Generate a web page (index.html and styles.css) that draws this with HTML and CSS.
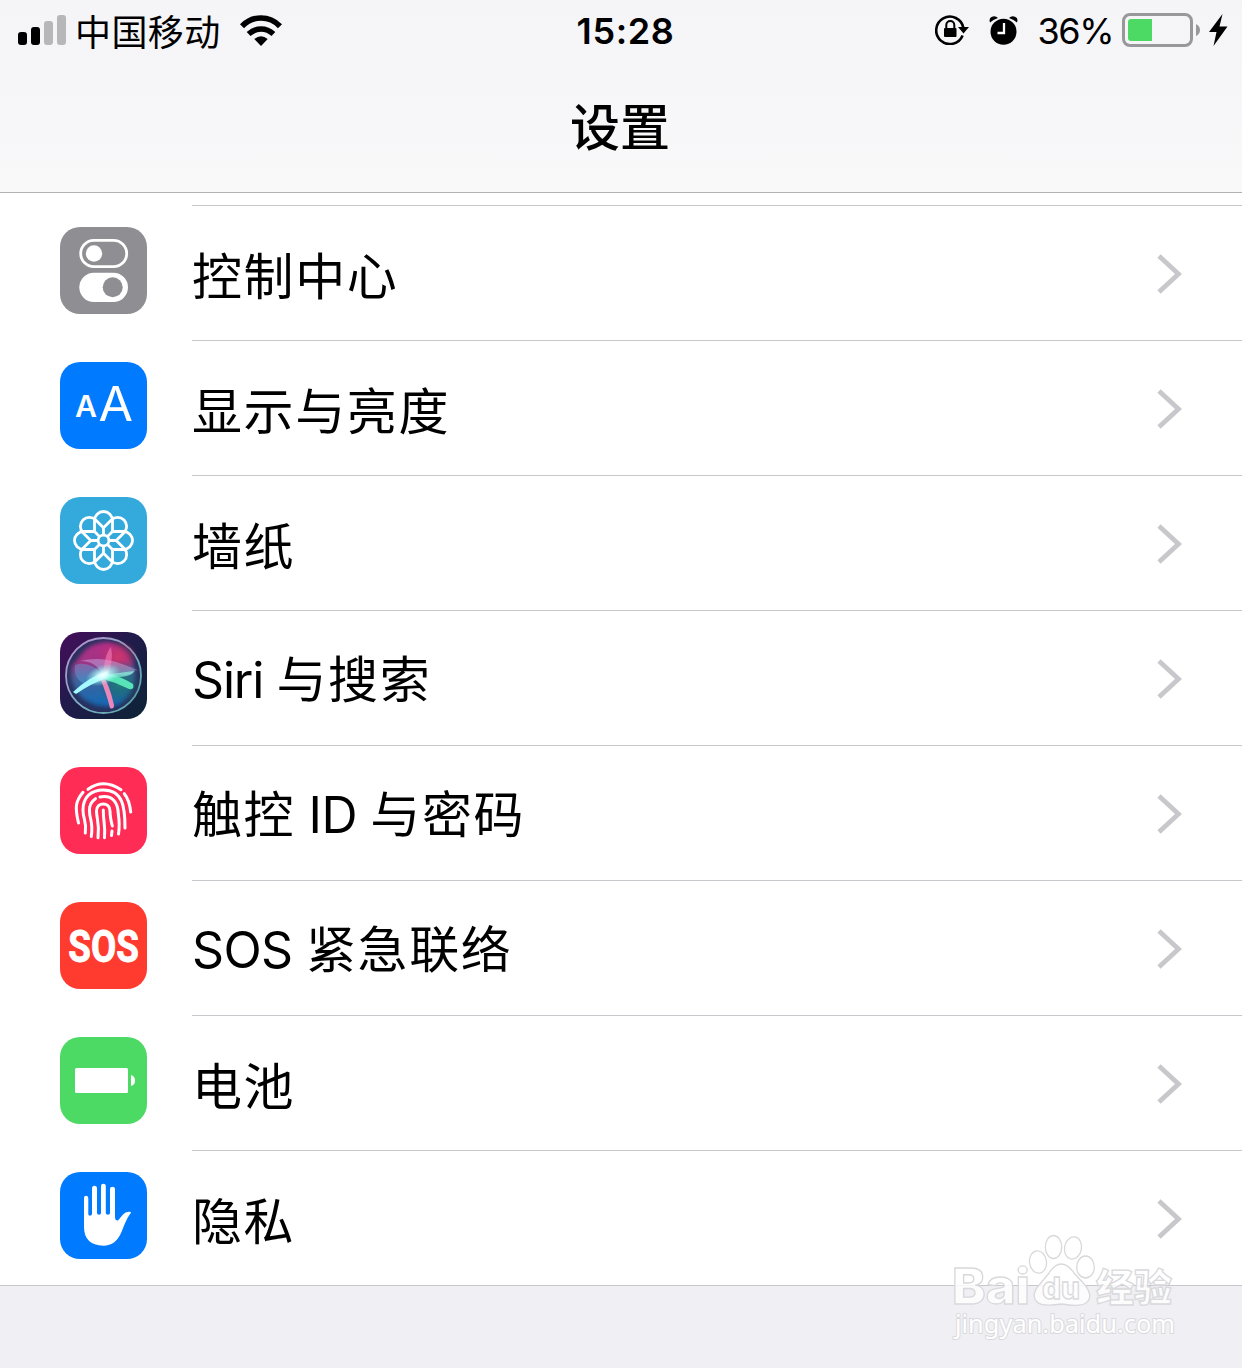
FILE: index.html
```html
<!DOCTYPE html>
<html lang="zh-CN">
<head>
<meta charset="utf-8">
<title>设置</title>
<link rel="stylesheet" href="styles.css">
</head>
<body>
<header class="header">
  <div class="status">
    <div class="status-left">
      <svg class="signal" width="48" height="30" viewBox="0 0 48 30"><rect y="17" width="9" height="13" rx="3"/><rect x="13" y="12" width="9" height="18" rx="3"/><g fill="#b7b7b9"><rect x="26" y="6" width="9" height="24" rx="3"/><rect x="39" width="9" height="30" rx="3"/></g></svg>
      <span class="carrier">中国移动</span>
      <svg class="wifi" width="42" height="31" viewBox="0 0 42 31"><g fill="none" stroke="#000" stroke-width="5.6"><path d="M2 11.2Q10 3 21 3T40 11.2"/><path d="M8.600 19Q14 14 21 14T33.400 19"/></g><path d="M14.300 24Q21 18.400 27.700 24L21 31Z"/></svg>
    </div>
    <time class="time">15:28</time>
    <div class="status-right">
      <svg class="lock" width="34" height="31" viewBox="0 0 34 31"><path d="M27.600 21.500A13.700 13.700 0 1 1 28.400 14" fill="none" stroke="#000" stroke-width="2.600"/><path d="M23 13h11l-5.500 6.500Z"/><rect x="9" y="14" width="12.500" height="9" rx="1"/><path d="M11.300 15v-4a4 4 0 0 1 8 0v4" fill="none" stroke="#000" stroke-width="2"/></svg>
      <svg class="alarm" width="29" height="29" viewBox="0 0 29 29"><circle cx="14.500" cy="15.800" r="13"/><path d="M1 6.500Q-.5 2 3 .7T9 2Q4 3.500 1 6.500ZM28 6.500Q29.500 2 26 .7T20 2Q25 3.500 28 6.500Z"/><path d="M15 7v10H8.500" fill="none" stroke="#fff" stroke-width="2.300"/></svg>
      <span class="percent">36%</span>
      <svg class="battery" width="79" height="34" viewBox="0 0 79 34"><rect x="1.500" y="1.500" width="68" height="31" rx="6.500" fill="none" stroke="#98989b" stroke-width="3"/><path d="M9 6H30V28H9Q6 28 6 25V9Q6 6 9 6Z" fill="#4cd964"/><path d="M74 11Q78 13 78 17T74 23Z" fill="#98989b"/></svg>
      <svg class="bolt" width="19" height="32" viewBox="0 0 19 32"><path d="M13.500 0L0 18H7.500L4.500 32L18.500 12.500H10.500Z"/></svg>
    </div>
  </div>
  <h1 class="title">设置</h1>
</header>
<main>
<ul class="list">
  <li class="row">
    <svg class="icon gray" viewBox="0 0 87 87"><rect x="20.700" y="13.400" width="46" height="26.300" rx="13.150" fill="none" stroke="#fff" stroke-width="2.800"/><circle cx="34" cy="26.500" r="8.200" fill="#fff"/><rect x="19.300" y="45.700" width="48.700" height="29.300" rx="14.650" fill="#fff"/><circle cx="52.700" cy="60.300" r="10" fill="#8e8e93"/></svg>
    <div class="cell"><span class="label">控制中心</span><svg class="chevron" viewBox="0 0 25 40"><path d="M2 2L21.500 20L2 38"/></svg></div>
  </li>
  <li class="row">
    <svg class="icon blue" viewBox="0 0 87 87"><g class="letters"><text x="15" y="54.700" font-size="29.500" font-weight="600" textLength="22" lengthAdjust="spacingAndGlyphs">A</text><text x="38.500" y="59" font-size="47.500" font-weight="400" textLength="34.500" lengthAdjust="spacingAndGlyphs">A</text></g></svg>
    <div class="cell"><span class="label">显示与亮度</span><svg class="chevron" viewBox="0 0 25 40"><path d="M2 2L21.500 20L2 38"/></svg></div>
  </li>
  <li class="row">
    <svg class="icon cyan" viewBox="0 0 87 87"><defs><path id="petal" d="M-9-9V-20A9 9 0 0 1 9-20V-9M0-12.700V-5"/></defs><g transform="translate(43.500 43.500)" fill="none" stroke="#fff" stroke-width="2.800"><circle r="5.400"/><use href="#petal"/><use href="#petal" transform="rotate(45)"/><use href="#petal" transform="rotate(90)"/><use href="#petal" transform="rotate(135)"/><use href="#petal" transform="rotate(180)"/><use href="#petal" transform="rotate(225)"/><use href="#petal" transform="rotate(270)"/><use href="#petal" transform="rotate(315)"/></g></svg>
    <div class="cell"><span class="label">墙纸</span><svg class="chevron" viewBox="0 0 25 40"><path d="M2 2L21.500 20L2 38"/></svg></div>
  </li>
  <li class="row">
    <svg class="icon" viewBox="0 0 87 87">
      <defs>
        <linearGradient id="sky" x1="0" y1="0" x2="1" y2="1"><stop stop-color="#470d5b"/><stop offset=".45" stop-color="#211b4b"/><stop offset="1" stop-color="#0b2435"/></linearGradient>
        <linearGradient id="ring" x1="0" y1="0" x2="1" y2="1"><stop stop-color="#c58bd0"/><stop offset=".5" stop-color="#7fb0c4"/><stop offset="1" stop-color="#58a5a8"/></linearGradient>
        <linearGradient id="orb" x1=".4" y1="0" x2=".5" y2="1"><stop stop-color="#b32c87"/><stop offset=".3" stop-color="#a03484"/><stop offset=".55" stop-color="#40659c"/><stop offset="1" stop-color="#1268b5"/></linearGradient>
        <radialGradient id="red"><stop stop-color="#cc386c"/><stop offset="1" stop-color="#d32767" stop-opacity="0"/></radialGradient>
        <radialGradient id="teal"><stop stop-color="#1e8278"/><stop offset="1" stop-color="#13585d" stop-opacity="0"/></radialGradient>
        <radialGradient id="glow"><stop stop-color="#fff"/><stop offset=".3" stop-color="#d5ffff" stop-opacity=".85"/><stop offset="1" stop-color="#8affee" stop-opacity="0"/></radialGradient>
        <filter id="soft"><feGaussianBlur stdDeviation=".6"/></filter>
        <filter id="haze"><feGaussianBlur stdDeviation="2"/></filter>
      </defs>
      <rect width="87" height="87" fill="url(#sky)"/>
      <circle cx="43.500" cy="43.500" r="37.500" fill="#28305f" stroke="url(#ring)" stroke-width="1.800"/>
      <path d="M20 24Q30 10 48 10Q68 15 75 38Q75 60 60 72Q42 79 23 67Q8 52 12 34Z" fill="url(#orb)" filter="url(#haze)"/>
      <ellipse cx="58" cy="25" rx="20" ry="17" fill="url(#red)"/>
      <ellipse cx="60" cy="51" rx="22" ry="23" fill="url(#teal)"/>
      <g filter="url(#soft)">
        <path d="M20 29Q40 24 62 32T75 38Q75 42 65 43L43 44Q37 29 20 29Z" fill="#d7c8ff" opacity=".38"/>
        <path d="M43 45Q44 23 51 15Q54 28 47 45Z" fill="#ff8cc5" opacity=".5"/>
        <path d="M15 33Q29 28 45 44L27 53Q13 48 15 33Z" fill="#5bc6ff" opacity=".3"/>
        <path d="M47 41Q62 45 73 52Q75 58 69 57Q55 50 40 46Z" fill="#59e4b6"/>
        <path d="M43 43L74 39Q72 45 55 45L42 47Z" fill="#8af1dc" opacity=".7"/>
        <path d="M42 42Q49 51 54 73Q54 78 50 76Q47 63 40 46Z" fill="#ed87ba"/>
        <path d="M48 39Q30 44 13 60L16 62Q30 52 47 46Z" fill="#a5faff"/>
      </g>
      <ellipse cx="43" cy="43" rx="18" ry="10" transform="rotate(-20 43 43)" fill="url(#glow)"/>
    </svg>
    <div class="cell"><span class="label"><span class="latin tight">Siri</span> 与搜索</span><svg class="chevron" viewBox="0 0 25 40"><path d="M2 2L21.500 20L2 38"/></svg></div>
  </li>
  <li class="row">
    <svg class="icon pink" viewBox="0 0 87 87"><g fill="none" stroke="#fff" stroke-width="3" stroke-linecap="round"><path d="M28 22.300Q43.500 11 61 22.700M23 25.300C15 35 15 41 18.500 56M64.300 26.700Q69.500 33 70.700 45"/><path d="M25.300 66C27 54 23 53 23 43C23 30 31 23 43.300 23C63 23 65 40 65 61"/><path d="M31.300 69.500C33.500 54 29.500 53 29.500 44Q29 36 35.500 31.700M40 30C53 27.500 58 36 58.300 47Q60 58 58.500 67"/><path d="M38 70.700C39.800 56 36.500 52 36.500 44C36.500 34.500 50 34.500 50 44Q50 50 52.300 59M52 64L51.500 68.500M44.500 70.700C45.500 57 43.300 56 43.300 43"/></g></svg>
    <div class="cell"><span class="label">触控 <span class="latin">ID</span> 与密码</span><svg class="chevron" viewBox="0 0 25 40"><path d="M2 2L21.500 20L2 38"/></svg></div>
  </li>
  <li class="row">
    <svg class="icon red" viewBox="0 0 87 87"><text class="sos" x="8.300" y="59.700" textLength="70.500" lengthAdjust="spacingAndGlyphs">SOS</text></svg>
    <div class="cell"><span class="label"><span class="latin">SOS</span> 紧急联络</span><svg class="chevron" viewBox="0 0 25 40"><path d="M2 2L21.500 20L2 38"/></svg></div>
  </li>
  <li class="row">
    <svg class="icon green" viewBox="0 0 87 87"><rect x="15" y="31" width="53" height="25" rx="1.500" fill="#fff"/><path d="M71 38Q75 39 75 43.500T71 49Z" fill="#fff"/></svg>
    <div class="cell"><span class="label">电池</span><svg class="chevron" viewBox="0 0 25 40"><path d="M2 2L21.500 20L2 38"/></svg></div>
  </li>
  <li class="row">
    <svg class="icon blue" viewBox="0 0 87 87"><path d="M24 26Q24 23.700 26 23.700T28.300 26V42Q28.300 43.800 30 43.800T32 42V16.500Q32 13.700 34.500 13.700T37 16.500V41Q37 42.700 39 42.700T41 41V14Q41 11.700 43.400 11.700T45.800 14V41Q45.800 42.700 47.900 42.700T50 41V17Q50 14.700 52.500 14.700T55 17V45Q55 48.700 58 48.500L63 42.500Q66 39 71 40Q71 41 69 43.500Q66 48 61.700 59.500Q56 73.700 43.300 73.700Q24 73 24 55Z" fill="#fff"/></svg>
    <div class="cell"><span class="label">隐私</span><svg class="chevron" viewBox="0 0 25 40"><path d="M2 2L21.500 20L2 38"/></svg></div>
  </li>
</ul>
</main>
<svg class="watermark" width="240" height="120" viewBox="0 0 240 120">
  <g class="wm-ink">
    <ellipse cx="96" cy="32" rx="8.500" ry="11.200" transform="rotate(-8 96 32)"/><ellipse cx="111.500" cy="17" rx="8.200" ry="11.500"/><ellipse cx="131" cy="18" rx="8.500" ry="11.200" transform="rotate(10 131 18)"/><ellipse cx="143.500" cy="37" rx="8.800" ry="11"/>
    <path d="M119 34Q126 34 132 43L143 55Q152 67 144 73Q138 77 120 74Q100 77 95 72Q88 65 98 54L107 43Q113 34 119 34Z"/>
    <text class="wm-latin" x="10" y="74" font-size="49" textLength="78" lengthAdjust="spacingAndGlyphs">Bai</text>
    <text class="wm-latin" x="100" y="69" font-size="30" textLength="38" lengthAdjust="spacingAndGlyphs">du</text>
    <text class="wm-cjk" x="154" y="71" font-size="38" textLength="76" lengthAdjust="spacingAndGlyphs">经验</text>
    <text class="wm-url" x="13" y="103" font-size="26" textLength="220" lengthAdjust="spacingAndGlyphs">jingyan.baidu.com</text>
  </g>
</svg>
</body>
</html>
```
FILE: styles.css
```css
* { box-sizing: border-box; }
body {
  position: relative;
  margin: 0;
  width: 1242px;
  height: 1368px;
  overflow: hidden;
  background: #efeff4;
  color: #000;
  font-family: Inter, "Noto Sans CJK SC", sans-serif;
}
svg { display: block; flex: none; }
.header {
  height: 193px;
  border-bottom: 1px solid #b2b2b4;
  background: linear-gradient(#f5f5f8, #f6f6f8 40%, #f9f9fa);
}
.status {
  display: grid;
  grid-template-columns: 1fr auto 1fr;
  align-items: center;
  height: 60px;
  padding: 0 14px 0 18px;
}
.status-left, .status-right { display: flex; align-items: center; }
.status-right { justify-content: flex-end; }
.carrier {
  margin-left: 9px;
  font: 36px/60px "Noto Sans CJK SC", sans-serif;
  letter-spacing: .4px;
}
.wifi { margin-left: 19px; }
.time {
  padding: 2px 0 0 5px;
  font-size: 36px;
  font-weight: 600;
  letter-spacing: .6px;
}
.lock { margin-bottom: 2px; }
.alarm { margin-left: 20px; }
.percent { padding-top: 2px; margin-left: 20px; font-size: 36px; letter-spacing: -1.5px; }
.battery { margin-left: 9px; }
.bolt { margin-left: 8px; }
.title {
  margin: 20px 2px 0 0;
  text-align: center;
  font: 500 50px/88px "Noto Sans CJK SC", sans-serif;
}
.list {
  margin: 0;
  padding: 12px 0 0;
  list-style: none;
  background: linear-gradient(#c8c7cc, #c8c7cc) 192px 12px / 1050px 1px no-repeat #fff;
}
.row {
  display: flex;
  align-items: center;
  gap: 45px;
  height: 135px;
  padding-left: 60px;
}
.row:first-child { height: 136px; }
.row:last-child { box-shadow: inset 0 -1px #c8c7cc; }
.icon { width: 87px; height: 87px; border-radius: 20px; margin-bottom: 6px; }
.row:first-child .icon { margin-bottom: 5px; }
.gray { background: #8e8e93; }
.blue { background: #007aff; }
.cyan { background: #34aadc; }
.pink { background: #ff2d55; }
.red { background: #ff3b30; }
.green { background: #4cd964; }
.letters { fill: #fff; font-family: Inter, sans-serif; }
.sos { fill: #fff; stroke: #fff; stroke-width: .9; font: 700 45px Roboto, sans-serif; }
.cell {
  display: flex;
  flex: 1;
  align-items: center;
  justify-content: space-between;
  height: 100%;
  padding: 2px 60px 0 0;
  border-bottom: 1px solid #c8c7cc;
}
.row:first-child .cell { padding-top: 3px; }
.label {
  padding-bottom: 2px;
  font: 50px/80px "Noto Sans CJK SC", sans-serif;
  letter-spacing: 1.6px;
  word-spacing: .6px;
}
.latin { font-family: Inter, sans-serif; font-size: 50px; letter-spacing: -.6px; }
.tight { letter-spacing: -1.2px; }
.chevron { width: 25px; height: 40px; }
.chevron path { fill: none; stroke: #c7c7cc; stroke-width: 4.8; }
.watermark { position: absolute; left: 942px; top: 1230px; }
.wm-ink { fill: #fff; fill-opacity: .82; stroke: #d9d9dc; stroke-width: 1.3; }
.wm-latin { font-family: Inter, sans-serif; font-weight: 800; }
.wm-cjk { font-family: "Noto Sans CJK SC", sans-serif; font-weight: 900; }
.wm-url { font-family: "Noto Sans", sans-serif; font-weight: 400; paint-order: stroke; stroke-width: 2; fill-opacity: 1; }
```
